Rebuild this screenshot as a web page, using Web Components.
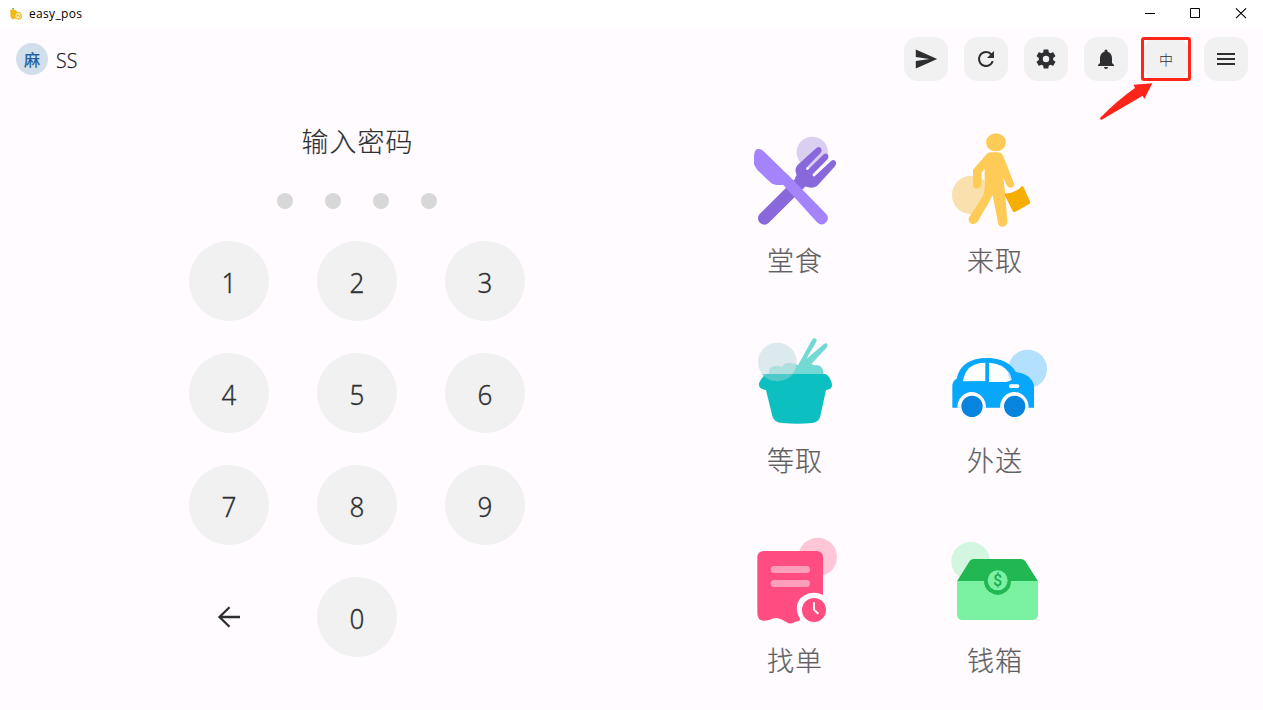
<!DOCTYPE html>
<html lang="zh-CN">
<head>
<meta charset="utf-8">
<title>easy_pos</title>
<style>
html,body{margin:0;height:100%;overflow:hidden;background:#fffbff}
</style>
</head>
<body>
<pos-app></pos-app>
<script>
const define = (name, css, html) => customElements.define(name, class extends HTMLElement {
  constructor() {
    super();
    const t = document.createElement('template');
    t.innerHTML = `<style>${css}</style>${html}`;
    this.attachShadow({mode: 'open'}).append(t.content.cloneNode(true));
  }
});

define('window-bar', `
:host{display:flex;align-items:center;height:28px;background:#fff;color:#000;font:12px/28px "Open Sans","Noto Sans",sans-serif}
.logo{width:14px;height:14px;margin:0 6px 0 9px}
.name{flex:1;letter-spacing:.32px}
.ctl{display:block;width:46px;height:28px}
`, `
<svg class="logo" viewBox="0 0 14 14"><path d="M3 1.5l2-.8v1.8H3z" fill="#58b947"/><path d="M1.2 3.5q1-1.5 3-.7 2-.5 3 .8l1 1.5q1.8-.6 3.2.4l1.2 1.5.5 3-1.6 2.4-3 .2-2.2-1.2-3.2.8-1.6-2.4z" fill="#f2b818"/><circle cx="9.2" cy="8.8" r="2.7" fill="#fff0bd"/><path d="M7.5 9.8l1.2-2.4 1.7 2.4 1-2" fill="none" stroke="#e7a60b" stroke-width=".8"/></svg>
<span class="name">easy_pos</span>
<svg class="ctl" viewBox="0 0 46 28"><path d="M20 13.5h10" stroke="#000"/></svg>
<svg class="ctl" viewBox="0 0 46 28"><path d="M19.5 8.5h9v9h-9z" fill="none" stroke="#000"/></svg>
<svg class="ctl" viewBox="0 0 46 28"><path d="M19 8.3l10 9.8M29 8.3l-10 9.8" stroke="#000" stroke-width="1.1"/></svg>
`);

define('tool-button', `
:host{display:flex;position:relative;align-items:center;justify-content:center;width:44px;height:44px;border-radius:14px;background:#f1f1f1;color:#2d2f31;font:300 14px/44px "Noto Sans CJK SC",sans-serif}
:host([marked])::after{content:"";position:absolute;left:-3px;top:0;width:44px;height:38px;border:3px solid #ff2418;border-radius:3px}
::slotted(svg){width:24px;height:24px;fill:currentColor}
`, `<slot></slot>`);

define('callout-arrow', `
:host{position:absolute;left:1099px;top:83px;width:56px;height:38px}
svg{display:block}
`, `<svg width="56" height="38" viewBox="0 0 168 114"><path d="M3 105Q55 52 108 15L104 5 160 1 136 48 131 38 8 110q-5 1-5-5z" fill="#ff2418"/></svg>`);

define('store-badge', `
:host{display:flex;align-items:center;gap:8px;color:#1b1b1f;font:300 19.5px/32px "Open Sans",sans-serif;-webkit-text-stroke:.25px}
.a{width:32px;height:32px;border-radius:50%;background:#d1dfeb;color:#1c5ca0;text-align:center;font:400 16px/33px "Noto Sans CJK TC",sans-serif}
.n{height:32px;padding-top:4px}
`, `<span class="a"><slot name="mark"></slot></span><span class="n"><slot></slot></span>`);

define('pin-key', `
:host{display:flex;align-items:center;justify-content:center;box-sizing:border-box;width:80px;height:80px;padding-top:1px;border-radius:50%;background:#f1f1f1;color:#2d2f31;font:300 28px/38px "Noto Sans","Open Sans",sans-serif;-webkit-text-stroke:.3px}
:host([plain]){background:none;padding:0}
.k{display:block;transform:scaleX(.93)}
:host([plain]) .k{transform:none}
`, `<span class="k"><slot></slot></span>`);

define('pin-pad', `
:host{display:flex;flex-direction:column;align-items:center;width:336px;color:#2d2f31}
h1{margin:0;font:300 27px/42px "Noto Sans CJK SC",sans-serif;letter-spacing:1px;padding-left:1px;-webkit-text-stroke:.15px}
.dots{display:flex;gap:32px;margin:31px 0 32px}
.dots i{width:16px;height:16px;border-radius:50%;background:#d8d8d8}
.keys{display:grid;grid-template-columns:repeat(3,80px);gap:32px 48px}
`, `
<h1>输入密码</h1>
<div class="dots"><i></i><i></i><i></i><i></i></div>
<div class="keys">
<pin-key>1</pin-key><pin-key>2</pin-key><pin-key>3</pin-key>
<pin-key>4</pin-key><pin-key>5</pin-key><pin-key>6</pin-key>
<pin-key>7</pin-key><pin-key>8</pin-key><pin-key>9</pin-key>
<pin-key plain><svg style="display:block" width="24" height="24" viewBox="0 0 24 24"><path d="M23 12H2.5M12.5 2.2L2.5 12l10 9.8" fill="none" stroke="#2d2f31" stroke-width="2.3"/></svg></pin-key><pin-key>0</pin-key>
</div>`);

define('menu-tile', `
:host{display:flex;flex-direction:column;align-items:center;width:200px;height:200px;color:#5e6062;font:300 27px/40px "Noto Sans CJK SC",sans-serif;-webkit-text-stroke:.2px}
::slotted(svg){width:120px;height:120px}
.l{letter-spacing:1px}
`, `<slot name="icon"></slot><span class="l"><slot></slot></span>`);

define('menu-grid', `
:host{display:grid;grid-template-columns:200px 200px}
svg{-webkit-text-stroke:0}
`, `
<menu-tile><svg slot="icon" viewBox="-15 0 360 360">
<circle cx="217" cy="97" r="47" fill="#dacff0"/>
<path d="M73 295L185 184" stroke="#8968dc" stroke-width="38" stroke-linecap="round"/>
<path d="M170 165Q162 150 172 136L229 84Q238 77 244 86 248 93 241 100L199 143q-3 6 4 7l48-47q9-6 14 3 2 8-4 13l-43 44q-2 7 6 6l50-47q9-5 14 4 2 7-3 13l-53 58q-13 9-27 5l-14-4-26-24z" fill="#8968dc"/>
<path d="M42 109V132Q45 140 52 150L91 187Q98 195 109 195H130L231 307Q246 321 259 306 269 293 258 281L151 172 70 93Q61 84 50 88 43 93 42 109Z" fill="#a483fb"/>
</svg>堂食</menu-tile>
<menu-tile><svg slot="icon" viewBox="0 0 360 360">
<circle cx="109" cy="225" r="58" fill="#fae0ad"/>
<ellipse cx="183" cy="67" rx="30" ry="27" fill="#ffcb57"/>
<path d="M114 149L156 101q6-4 14-4h19q10 0 14 8l34 85q3 10-8 13-8 1-13-6l-11-24 6 51 6 83q-2 12-14 13-12 0-14-11l-16-84-45 80q-7 9-17 7-12-5-10-18l43-66q8-24 5-52v-30l-9 12v34q-1 12-12 14-12 1-14-11z" fill="#ffcb57"/>
<path d="M210 220q16 2 29-6 14-6 22-16l4 2 21 46-3 6-43 24q-5 1-7-3l-24-48z" fill="#f7ae02"/>
</svg>来取</menu-tile>
<menu-tile><svg slot="icon" viewBox="-15 -15 360 360">
<path d="M87 148Q84 123 106 123 116 121 126 126 136 109 158 115 168 116 174 121L216 44q6-7 12-3 4 3 1 9L199 102 252 57q7-5 10 1 2 6-3 11L214 117q9 5 16 3 21 2 21 28z" fill="#73d9d5"/>
<path d="M79 147H257q13 8 19 30 2 16-18 18L241 273q-4 18-24 21-43 4-90 0-24 0-30-21L78 195Q54 192 57 175q8-20 22-28z" fill="#0cbfc1"/>
<circle cx="112" cy="111" r="58" fill="#cce1e4" opacity=".67"/><path d="M66 147h92l12 0Q148 169 112 169 80 168 66 147z" fill="#28bfc1" opacity=".6"/>
</svg>等取</menu-tile>
<menu-tile><svg slot="icon" viewBox="0 -15 360 360">
<circle cx="278" cy="132" r="58" fill="#b3e1fd"/>
<path d="M52 248V183q0-15 13-22Q78 99 157 99q60 0 86 42 44 6 54 39v68h-24a38 38 0 0 0-72 0H147a38 38 0 0 0-71 0z" fill="#07a7fc"/>
<path d="M84 169Q91 114 151 113V168z" fill="#fff"/>
<path d="M162 113q43 2 62 33 3 10 6 18-9 7-26 7h-42z" fill="#fff"/>
<path d="M220 138q-3 12 4 24l6 2q-1-10-10-26z" fill="#b3e1fd"/>
<path d="M67 248a43 47 0 0 1 86 0M195 248a43 47 0 0 1 86 0" fill="#fffbff"/>
<rect x="222" y="178" width="31" height="11" rx="5" fill="#fff"/>
<circle cx="111" cy="244" r="32" fill="#0784dd"/><circle cx="239" cy="244" r="32" fill="#0784dd"/>
</svg>外送</menu-tile>
<menu-tile><svg slot="icon" viewBox="-15 -30 360 360">
<circle cx="233" cy="81" r="58" fill="#ffc6d7"/>
<path d="M52 83q0-20 20-20h157q20 0 20 20v189h-71l-14 4q-12 9-25 0-15-9-27-12-12-1-22 5-38 12-38-20z" fill="#ff4d81"/>
<rect x="92" y="108" width="118" height="21" rx="10.5" fill="#ff9ebb"/><rect x="92" y="150" width="118" height="21" rx="10.5" fill="#ff9ebb"/>
<path d="M249 195Q228 184 207 190 177 199 171 226q-3 22 9 40l-2 16h80V207z" fill="#fffbff"/>
<circle cx="222" cy="240" r="36" fill="#ff4d81"/><path d="M222 217v22l13 12" stroke="#fff" stroke-width="6" fill="none"/>
</svg>找单</menu-tile>
<menu-tile><svg slot="icon" viewBox="0 -30 360 360">
<circle cx="107" cy="94" r="58" fill="#d3f6e0"/>
<path d="M66 154L104 93q5-6 12-6H257q9 0 14 7l38 60-45 15H110z" fill="#21b752"/>
<path d="M66 153H309V252q0 18-18 18H84q-18 0-18-18z" fill="#7af2a1"/>
<path d="M147 153h81q0 20-13 31-26 22-54 0-14-12-14-31z" fill="#21b752"/>
<circle cx="188" cy="151" r="30" fill="#7af2a1"/><text x="188" y="168" text-anchor="middle" font-family="Roboto,sans-serif" font-size="47" font-weight="500" fill="#21a94f">$</text>
</svg>钱箱</menu-tile>`);

define('pos-app', `
:host{display:flex;flex-direction:column;position:relative;height:710px;width:1263px;background:#fffbff;overflow:hidden}
header{display:flex;align-items:flex-start;justify-content:space-between;padding:9px 15px 0 16px;height:64px;box-sizing:border-box}
store-badge{height:32px;margin-top:6px}
nav{display:flex;gap:16px}
main{display:flex;align-items:flex-start;padding-left:189px}
pin-pad{margin-top:28px}
menu-grid{margin:28px 0 0 170px}
window-bar,header{flex:none}
`, `
<window-bar></window-bar>
<header>
<store-badge><span slot="mark">麻</span>SS</store-badge>
<nav>
<tool-button><svg viewBox="0 0 24 24"><path d="M1.8 2.5L23.2 12 1.8 21.5V14L15.5 12 1.8 10z"/></svg></tool-button>
<tool-button><svg viewBox="0 0 24 24"><path d="M17.65 6.35A7.96 7.96 0 0 0 12 4a8 8 0 1 0 7.73 10h-2.08A6 6 0 1 1 12 6c1.66 0 3.14.69 4.22 1.78L13 11h7V4z"/></svg></tool-button>
<tool-button><svg viewBox="0 0 24 24"><path d="M19.14 12.94c.04-.3.06-.61.06-.94s-.02-.64-.07-.94l2.03-1.58a.49.49 0 0 0 .12-.61l-1.92-3.32a.488.488 0 0 0-.59-.22l-2.39.96c-.5-.38-1.03-.7-1.62-.94l-.36-2.54a.484.484 0 0 0-.48-.41h-3.84c-.24 0-.43.17-.47.41l-.36 2.54c-.59.24-1.13.57-1.62.94l-2.39-.96c-.22-.08-.47 0-.59.22L2.74 8.87c-.12.21-.08.47.12.61l2.03 1.58c-.05.3-.09.63-.09.94s.02.64.07.94l-2.03 1.58a.49.49 0 0 0-.12.61l1.92 3.32c.12.22.37.29.59.22l2.39-.96c.5.38 1.03.7 1.62.94l.36 2.54c.05.24.24.41.48.41h3.84c.24 0 .44-.17.47-.41l.36-2.54c.59-.24 1.13-.56 1.62-.94l2.39.96c.22.08.47 0 .59-.22l1.92-3.32c.12-.22.07-.47-.12-.61zM12 15.2a3.2 3.2 0 1 1 0-6.4 3.2 3.2 0 0 1 0 6.4z"/></svg></tool-button>
<tool-button><svg viewBox="0 0 24 24"><path d="M12 22c1.1 0 2-.9 2-2h-4a2 2 0 0 0 2 2zm6-6v-5c0-3.07-1.64-5.64-4.5-6.32V4a1.5 1.5 0 0 0-3 0v.68C7.63 5.36 6 7.92 6 11v5l-2 2v1h16v-1z"/></svg></tool-button>
<tool-button marked>中</tool-button>
<tool-button><svg viewBox="0 0 24 24"><path d="M3 18h18v-2H3zm0-5h18v-2H3zm0-7v2h18V6z"/></svg></tool-button>
</nav>
</header>
<main><pin-pad></pin-pad><menu-grid></menu-grid></main>
<callout-arrow></callout-arrow>
`);
</script>
</body>
</html>
